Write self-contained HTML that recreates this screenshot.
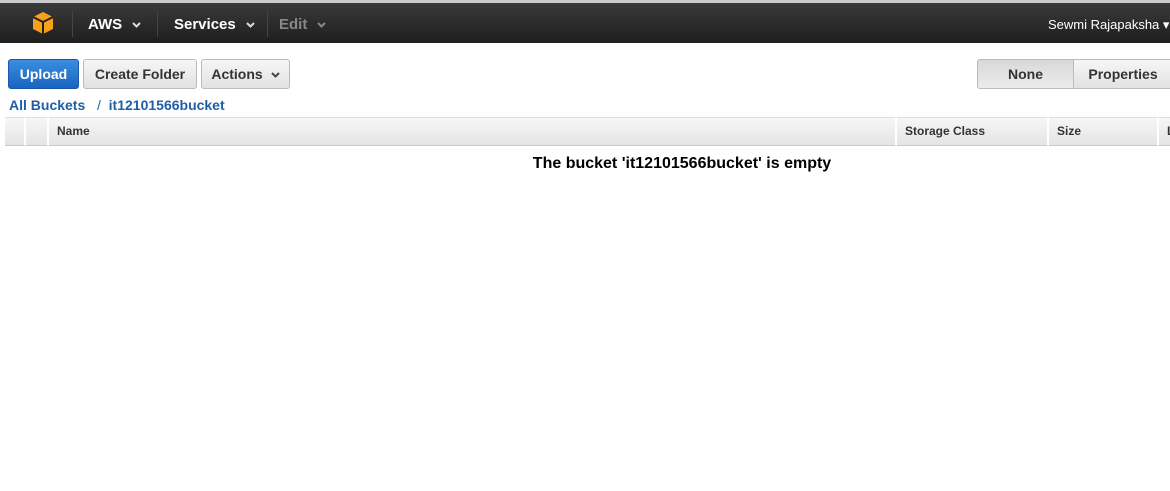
<!DOCTYPE html><html><head><style>
body{margin:0;width:1170px;height:491px;background:#fff;font-family:"Liberation Sans",Arial,sans-serif;position:relative;overflow:hidden}
.top{position:absolute;left:0;top:0;width:1170px;height:43px;background:linear-gradient(#3a3a3a,#1e1e1e);border-top:3px solid #ccc;box-sizing:border-box}
.t{position:absolute;color:#fff;font-weight:bold;font-size:15px;top:13px}
.sep{position:absolute;top:8px;width:1px;height:26px;background:#444}
.btn{position:absolute;top:59px;height:30px;box-sizing:border-box;border:1px solid #bbb;border-radius:3px;background:linear-gradient(#f6f6f6,#e2e2e2);font-weight:bold;font-size:14px;color:#333;text-align:center;line-height:28px}
.hd{position:absolute;top:117px;height:29px;box-sizing:border-box;background:linear-gradient(#f7f7f7,#e4e4e4);border-top:1px solid #ddd;border-bottom:1px solid #ccc;border-right:2px solid #fff;font-size:12px;font-weight:bold;color:#333;line-height:27px;padding-left:8px}
.ch{display:inline-block;vertical-align:middle;margin-left:6px}
</style></head><body>
<div class="top">
<svg style="position:absolute;left:31px;top:8px" width="24" height="24" viewBox="0 0 24 24"><path d="M12 1L22 6V18L12 23L2 18V6Z" fill="#f7a01c"/><path d="M2 6L12 11L22 6M12 11V23" stroke="#222" stroke-width="2" fill="none"/></svg>
<div class="sep" style="left:72px"></div>
<div class="t" style="left:88px">AWS<svg class="ch" style="margin-left:10px" width="9" height="6"><path d="M1 1L4.5 4.5L8 1" stroke="#ddd" stroke-width="2" fill="none"/></svg></div>
<div class="sep" style="left:157px"></div>
<div class="t" style="left:174px">Services<svg class="ch" style="margin-left:10px" width="9" height="6"><path d="M1 1L4.5 4.5L8 1" stroke="#ddd" stroke-width="2" fill="none"/></svg></div>
<div class="sep" style="left:267px"></div>
<div class="t" style="left:279px;color:#888">Edit<svg class="ch" style="margin-left:10px" width="9" height="6"><path d="M1 1L4.5 4.5L8 1" stroke="#888" stroke-width="2" fill="none"/></svg></div>
<div class="t" style="left:1048px;font-weight:normal;font-size:13px;top:14px">Sewmi Rajapaksha ▾</div>
</div>
<div class="btn" style="left:8px;width:71px;background:linear-gradient(#3b8ee0,#1a64c0);border-color:#1a5aa8;color:#fff">Upload</div>
<div class="btn" style="left:83px;width:114px">Create Folder</div>
<div class="btn" style="left:201px;width:89px">Actions<svg class="ch" style="margin-left:8px" width="9" height="6"><path d="M1 1L4.5 4.5L8 1" stroke="#444" stroke-width="2" fill="none"/></svg></div>
<div class="btn" style="left:977px;width:97px;border-radius:3px 0 0 3px;background:linear-gradient(#d8d8d8,#ececec)">None</div>
<div class="btn" style="left:1073px;width:100px;border-radius:0">Properties</div>
<div style="position:absolute;left:9px;top:97px;font-size:14px;font-weight:bold;color:#1f5fa8">All Buckets</div>
<div style="position:absolute;left:97px;top:97px;font-size:14px;font-weight:bold;color:#1f5fa8"><span style="font-weight:normal">/</span>&nbsp; it12101566bucket</div>
<div class="hd" style="left:5px;width:21px;padding:0"></div>
<div class="hd" style="left:26px;width:23px;padding:0"></div>
<div class="hd" style="left:49px;width:848px">Name</div>
<div class="hd" style="left:897px;width:152px">Storage Class</div>
<div class="hd" style="left:1049px;width:110px">Size</div>
<div class="hd" style="left:1159px;width:20px">L</div>
<div style="position:absolute;left:0;width:1364px;top:155px;text-align:center;font-weight:bold;font-size:16px;color:#000">The bucket 'it12101566bucket' is empty</div>
</body></html>
